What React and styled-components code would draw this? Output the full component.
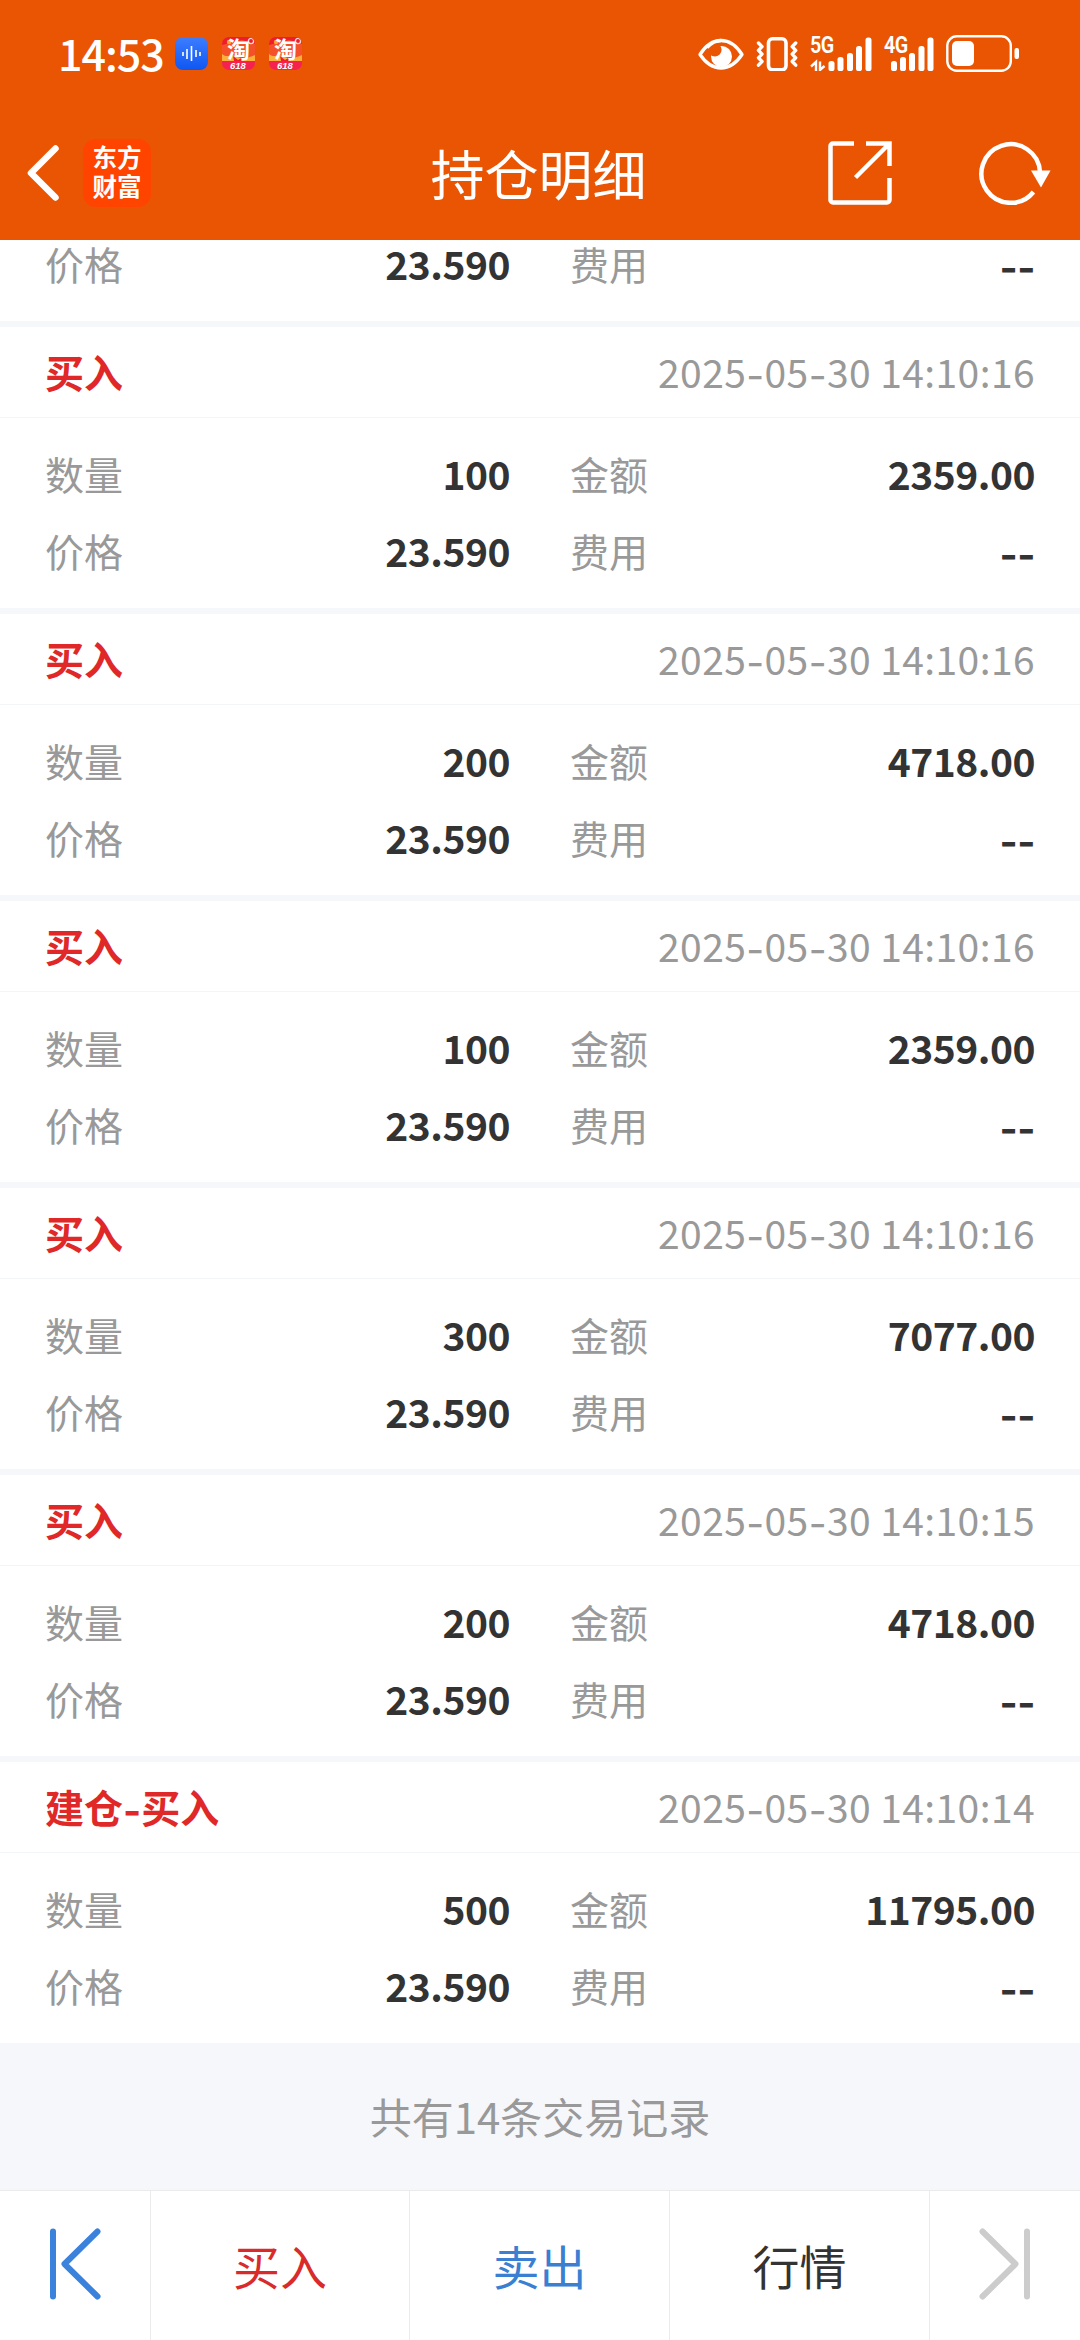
import React from "react";
import styled, { createGlobalStyle } from "styled-components";

const records = [
  { type: "买入", time: "2025-05-30 14:10:16", count: "100", amount: "2359.00" },
  { type: "买入", time: "2025-05-30 14:10:16", count: "200", amount: "4718.00" },
  { type: "买入", time: "2025-05-30 14:10:16", count: "100", amount: "2359.00" },
  { type: "买入", time: "2025-05-30 14:10:16", count: "300", amount: "7077.00" },
  { type: "买入", time: "2025-05-30 14:10:15", count: "200", amount: "4718.00" },
  { type: "建仓-买入", time: "2025-05-30 14:10:14", count: "500", amount: "11795.00" },
];

// hyphens are set in a wider face than the digits
const dashed = (text) =>
  text.split(/(-)/).map((part, i) => (part === "-" ? <Dash key={i}>-</Dash> : part));

const Bars = ({ xs, heights }) =>
  xs.map((x, i) => (
    <rect key={x} x={x} y={34 - heights[i]} width="6" height={heights[i]} rx="2.6" fill="#fff" />
  ));

const TaoIcon = () => (
  <TaoBadge>
    <svg width="33" height="33" viewBox="0 0 33 33">
      <rect width="33" height="33" fill="#f4502a" />
      <path d="M0 0h33v7L20 3 0 8z" fill="#ee1c2e" />
      <path d="M0 17c6 5 10-1 16 3s11 0 17-2v7H0z" fill="#fbb03b" />
      <path d="M11 19l5 4 5-3-2 4h-7z" fill="#ee1c2e" />
      <circle cx="7" cy="5" r="2.2" fill="#ffa62b" />
      <circle cx="29" cy="4" r="2.6" fill="none" stroke="#ffd9d9" strokeWidth="1.4" />
      <path d="M0 24h33v9H0z" fill="#f5224f" />
    </svg>
    <TaoWord>淘</TaoWord>
    <TaoSale>618</TaoSale>
  </TaoBadge>
);

const Pair = ({ label, value }) => (
  <PairBox>
    <Label>{label}</Label>
    <Value>{dashed(value)}</Value>
  </PairBox>
);

const App = () => {
  return (
    <Screen>
      <GlobalStyle />
      <StatusBar>
        <StatusLeft>
          <Clock>14:53</Clock>
          <svg width="33" height="33" viewBox="0 0 33 33">
            <defs>
              <linearGradient id="voice" x1="0" y1="0" x2="0" y2="1">
                <stop offset="0" stopColor="#3d7dff" />
                <stop offset="1" stopColor="#0f57f2" />
              </linearGradient>
            </defs>
            <rect width="33" height="33" rx="8" fill="url(#voice)" />
            <path d="M8 15v4M12 12v10M16.500 9v15M21 13v7M25 15v4" stroke="#fff" strokeWidth="1.600" />
          </svg>
          <TaoIcon />
          <TaoIcon />
        </StatusLeft>
        <StatusRight>
          <svg width="46" height="34" viewBox="0 0 46 34">
            <path d="M2 17.500C8 8 15 3.500 23 3.500s15 4.500 21 14c-6 9-13 13.500-21 13.500S8 26.500 2 17.500z" fill="none" stroke="#fff" strokeWidth="3.300" strokeLinejoin="round" />
            <circle cx="23.500" cy="19.500" r="10.500" fill="#fff" />
            <circle cx="16.800" cy="12.800" r="6.800" fill="#ea5504" />
            <path d="M9 10.500C13.500 5.800 18 3.500 23 3.500" fill="none" stroke="#fff" strokeWidth="3.300" />
          </svg>
          <svg width="42" height="34" viewBox="0 0 42 34">
            <rect x="12.500" y="1.800" width="17.500" height="31" rx="4" fill="none" stroke="#fff" strokeWidth="3.600" />
            <path d="M2.500 6l3.500 3.700-3.500 3.700L6 17.100l-3.500 3.700L6 24.500l-3.500 3.700M39.700 6l-3.500 3.700 3.500 3.700-3.500 3.700 3.500 3.700-3.500 3.700 3.500 3.700" fill="none" stroke="#fff" strokeWidth="3.400" strokeLinejoin="round" strokeLinecap="round" />
          </svg>
          <Signal>
            <NetType>5G</NetType>
            <svg width="62" height="34" viewBox="0 0 62 34">
              <Bars xs={[18.5, 27.5, 37, 46, 55.5]} heights={[10, 14, 18, 25, 33.5]} />
              <path d="M6 34V25l-5 4.500M10 24.500V33l4.500-4" fill="none" stroke="#fff" strokeWidth="2.400" />
            </svg>
          </Signal>
          <Signal>
            <NetType>4G</NetType>
            <svg width="50" height="34" viewBox="0 0 50 34">
              <Bars xs={[7, 16, 25, 34.5, 43.5]} heights={[10, 14, 18, 25, 33.5]} />
            </svg>
          </Signal>
          <svg width="74" height="38" viewBox="0 0 74 38">
            <rect x="1.300" y="1.300" width="63.500" height="34.500" rx="9.500" fill="none" stroke="#fff" strokeWidth="2.400" />
            <rect x="6" y="6" width="22" height="25" rx="5" fill="#fff" />
            <rect x="68.500" y="13" width="4.500" height="11" rx="2" fill="#fff" />
          </svg>
        </StatusRight>
      </StatusBar>

      <NavBar>
        <NavSide>
          <svg width="33" height="56" viewBox="0 0 33 56">
            <path d="M29.500 3.500L5 28l24.500 24.500" fill="none" stroke="#fff" strokeWidth="6.500" strokeLinecap="round" strokeLinejoin="round" />
          </svg>
          <Logo>
            <span>东方</span>
            <span>财富</span>
          </Logo>
        </NavSide>
        <Title>持仓明细</Title>
        <NavSide $right>
          <svg width="64" height="64" viewBox="0 0 64 64">
            <path d="M26 2.500H5a2.500 2.500 0 0 0-2.500 2.500v54a2.500 2.500 0 0 0 2.500 2.500h54a2.500 2.500 0 0 0 2.500-2.500V37M38 2.500h23.500V25M61 3L27.500 36.500" fill="none" stroke="#fff" strokeWidth="4.500" />
          </svg>
          <svg width="72" height="64" viewBox="0 0 72 64">
            <path d="M61 31A29.300 29.300 0 1 0 54.500 51" fill="none" stroke="#fff" strokeWidth="4.500" />
            <path d="M52 29.500h19.500L62 46.500z" fill="#fff" />
          </svg>
        </NavSide>
      </NavBar>

      <CutRow>
        <Pair label="价格" value="23.590" />
        <Pair label="费用" value="--" />
      </CutRow>

      {records.map((item, i) => (
        <Card key={i}>
          <CardHead>
            <Kind>{dashed(item.type)}</Kind>
            <Time>{dashed(item.time)}</Time>
          </CardHead>
          <CardBody>
            <Row>
              <Pair label="数量" value={item.count} />
              <Pair label="金额" value={item.amount} />
            </Row>
            <Row>
              <Pair label="价格" value="23.590" />
              <Pair label="费用" value="--" />
            </Row>
          </CardBody>
        </Card>
      ))}

      <Total>共有14条交易记录</Total>

      <TabBar>
        <Tab>
          <svg width="52" height="72" viewBox="0 0 52 72">
            <path d="M4 3.500v65M48.500 3.500L15.500 36l33 32.500" fill="none" stroke="#3b82dc" strokeWidth="6" strokeLinecap="round" strokeLinejoin="round" />
          </svg>
        </Tab>
        <Tab $color="#d92b2b">买入</Tab>
        <Tab $color="#3b7fd2">卖出</Tab>
        <Tab $color="#333">行情</Tab>
        <Tab>
          <svg width="52" height="72" viewBox="0 0 52 72">
            <path d="M48 3.500v65M3.500 3.500L36.500 36l-33 32.500" fill="none" stroke="#ccc" strokeWidth="6" strokeLinecap="round" strokeLinejoin="round" />
          </svg>
        </Tab>
      </TabBar>
    </Screen>
  );
};

export default App;

const GlobalStyle = createGlobalStyle`
  body{
    margin: 0;
    background: #fff;
    font-family: "Noto Sans CJK SC", sans-serif;
  }
  svg{
    display: block;
    flex-shrink: 0;
  }
`;

const Screen = styled.div`
  width: 1080px;
  height: 2340px;
  overflow: hidden;
  display: flex;
  flex-direction: column;
  background: #fff;
`;

const StatusBar = styled.div`
  height: 107px;
  flex-shrink: 0;
  box-sizing: border-box;
  padding: 0 60px 0 58px;
  display: flex;
  align-items: center;
  justify-content: space-between;
  background: #ea5504;
  color: #fff;
`;

const StatusLeft = styled.div`
  display: flex;
  align-items: center;
  gap: 14px;
`;

const Clock = styled.span`
  width: 103px;
  padding-bottom: 3px;
  font-size: 43px;
  line-height: 50px;
  font-weight: 500;
  letter-spacing: -1px;
  white-space: nowrap;
`;

const TaoBadge = styled.div`
  position: relative;
  width: 33px;
  height: 33px;
  svg{
    border-radius: 7px;
  }
`;

const TaoWord = styled.span`
  position: absolute;
  left: 5px;
  top: 0;
  font-size: 23px;
  line-height: 23px;
  font-weight: 700;
`;

const TaoSale = styled.span`
  position: absolute;
  left: 8px;
  top: 24px;
  font-family: "Liberation Sans", sans-serif;
  font-size: 9.5px;
  line-height: 9px;
  font-weight: 700;
  font-style: italic;
`;

const StatusRight = styled.div`
  display: flex;
  align-items: center;
  gap: 12px;
`;

const Signal = styled.div`
  position: relative;
`;

const NetType = styled.span`
  position: absolute;
  left: 0;
  top: -1px;
  font-family: Roboto, sans-serif;
  font-size: 23px;
  line-height: 20px;
  font-weight: 600;
  letter-spacing: -0.5px;
  transform: scaleX(0.86);
  transform-origin: left;
`;

const NavBar = styled.div`
  height: 133px;
  flex-shrink: 0;
  box-sizing: border-box;
  padding: 0 29px 2px 26px;
  display: flex;
  align-items: center;
  background: #ea5504;
  color: #fff;
`;

const NavSide = styled.div`
  flex: 1;
  display: flex;
  align-items: center;
  gap: ${(props) => (props.$right ? "87px" : "24px")};
  justify-content: ${(props) => (props.$right ? "flex-end" : "flex-start")};
`;

const Logo = styled.div`
  width: 68px;
  height: 68px;
  border-radius: 13px;
  background: #ff4400;
  display: flex;
  flex-direction: column;
  align-items: center;
  justify-content: center;
  box-sizing: border-box;
  padding-bottom: 3px;
  span{
    font-size: 24.5px;
    line-height: 29px;
    font-weight: 700;
  }
`;

const Title = styled.h1`
  margin: 0;
  font-size: 54px;
  line-height: 60px;
  font-weight: 400;
`;

const Row = styled.div`
  display: flex;
  gap: 60px;
  height: 77px;
  align-items: center;
`;

const CutRow = styled(Row)`
  height: 81px;
  flex-shrink: 0;
  padding: 0 45px;
  align-items: flex-start;
  > div{
    margin-top: -3px;
  }
`;

const Card = styled.div`
  flex-shrink: 0;
  border-top: 6px solid #f6f7fa;
`;

const CardHead = styled.div`
  height: 88px;
  padding: 0 45px 2px;
  display: flex;
  align-items: center;
  justify-content: space-between;
  border-bottom: 1px solid #f4f5f7;
`;

const CardBody = styled.div`
  height: 154px;
  padding: 16px 45px 20px;
`;

const PairBox = styled.div`
  flex: 1;
  display: flex;
  align-items: center;
  justify-content: space-between;
  font-size: 39px;
  line-height: 52px;
`;

const Label = styled.span`
  color: #999;
`;

const Value = styled.span`
  color: #333;
  font-weight: 700;
  letter-spacing: -0.5px;
`;

const Kind = styled.span`
  color: #e02828;
  font-size: 39px;
  line-height: 52px;
  font-weight: 700;
`;

const Time = styled.span`
  color: #999;
  font-size: 39px;
  line-height: 52px;
  letter-spacing: 0.4px;
`;

const Dash = styled.span`
  font-family: Inter, sans-serif;
  line-height: 1;
  vertical-align: -2px;
`;

const Total = styled.div`
  height: 145px;
  padding-bottom: 2px;
  flex-shrink: 0;
  display: flex;
  align-items: center;
  justify-content: center;
  background: #f6f7fa;
  color: #999;
  font-size: 42px;
`;

const TabBar = styled.div`
  flex: 1;
  display: grid;
  grid-template-columns: 151px 259px 260px 260px 150px;
  border-top: 1px solid #ebebeb;
`;

const Tab = styled.div`
  display: flex;
  align-items: center;
  justify-content: center;
  padding-bottom: 3px;
  font-size: 47px;
  color: ${(props) => props.$color};
  border-right: 1px solid #ebebeb;
  &:last-child{
    border-right: none;
  }
`;
